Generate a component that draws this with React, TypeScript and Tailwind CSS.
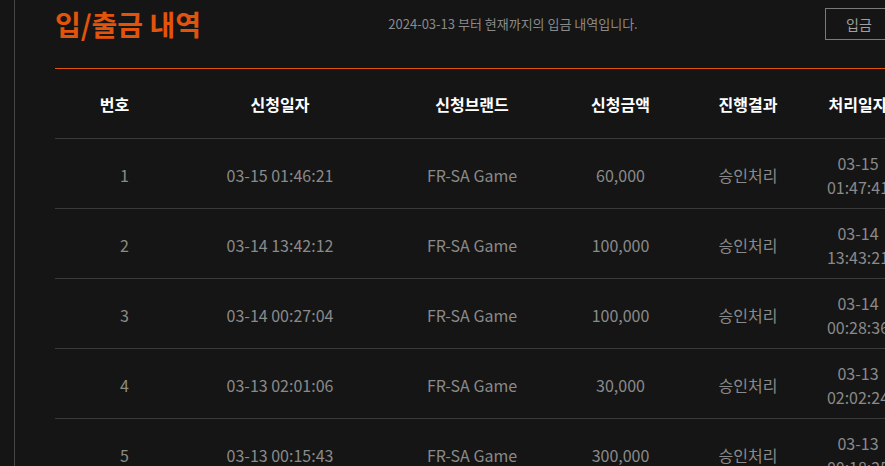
import React from "react";

const rows = [
  { no: "1", date: "03-15 01:46:21", brand: "FR-SA Game", amount: "60,000", status: "승인처리", done: "03-15 01:47:41" },
  { no: "2", date: "03-14 13:42:12", brand: "FR-SA Game", amount: "100,000", status: "승인처리", done: "03-14 13:43:21" },
  { no: "3", date: "03-14 00:27:04", brand: "FR-SA Game", amount: "100,000", status: "승인처리", done: "03-14 00:28:36" },
  { no: "4", date: "03-13 02:01:06", brand: "FR-SA Game", amount: "30,000", status: "승인처리", done: "03-13 02:02:24" },
  { no: "5", date: "03-13 00:15:43", brand: "FR-SA Game", amount: "300,000", status: "승인처리", done: "03-13 00:18:25" },
];

export default function App() {
  return (
    <div
      className="flex h-[466px] w-[885px] overflow-hidden bg-[#151515]"
      style={{ fontFamily: '"Noto Sans CJK KR", "Noto Sans", sans-serif' }}
    >
      <div className="w-[15px] shrink-0 border-r border-[#464646]" />
      <div className="shrink-0 pl-[40px]">
        <div className="flex w-[838px] items-center justify-between pt-2">
          <h1 className="text-[28px] font-bold leading-none text-[#e2540c]">입/출금 내역</h1>
          <p className="text-[13px] text-[#8a8a8a]">2024-03-13 부터 현재까지의 입금 내역입니다.</p>
          <button className="h-8 w-[68px] border border-[#7a7a7a] text-[14px] text-[#a0a0a0]">입금</button>
        </div>
        <table className="mt-7 w-[848px] table-fixed border-collapse border-t border-[#e2540c] text-center text-[16px]">
          <colgroup>
            <col className="w-[119px]" />
            <col className="w-[212px]" />
            <col className="w-[172px]" />
            <col className="w-[125px]" />
            <col className="w-[130px]" />
            <col className="w-[90px]" />
          </colgroup>
          <thead>
            <tr className="h-[70px] border-b border-[#3a3a3a]">
              {["번호", "신청일자", "신청브랜드", "신청금액", "진행결과", "처리일자"].map((h) => (
                <th key={h} className="px-1 font-bold text-white">
                  {h}
                </th>
              ))}
            </tr>
          </thead>
          <tbody className="text-[#8a8a8a]">
            {rows.map((r) => (
              <tr key={r.no} className="h-[70px] border-b border-[#3a3a3a]">
                <td className="pl-[20px] pt-[3px] text-[#8b8b80]">{r.no}</td>
                <td className="px-2 pt-[3px]">{r.date}</td>
                <td className="px-2 pt-[3px]">{r.brand}</td>
                <td className="px-2 pt-[3px]">{r.amount}</td>
                <td className="px-2 pt-[3px]">{r.status}</td>
                <td className="px-2 pt-[3px] leading-[24px]">{r.done}</td>
              </tr>
            ))}
          </tbody>
        </table>
      </div>
    </div>
  );
}
